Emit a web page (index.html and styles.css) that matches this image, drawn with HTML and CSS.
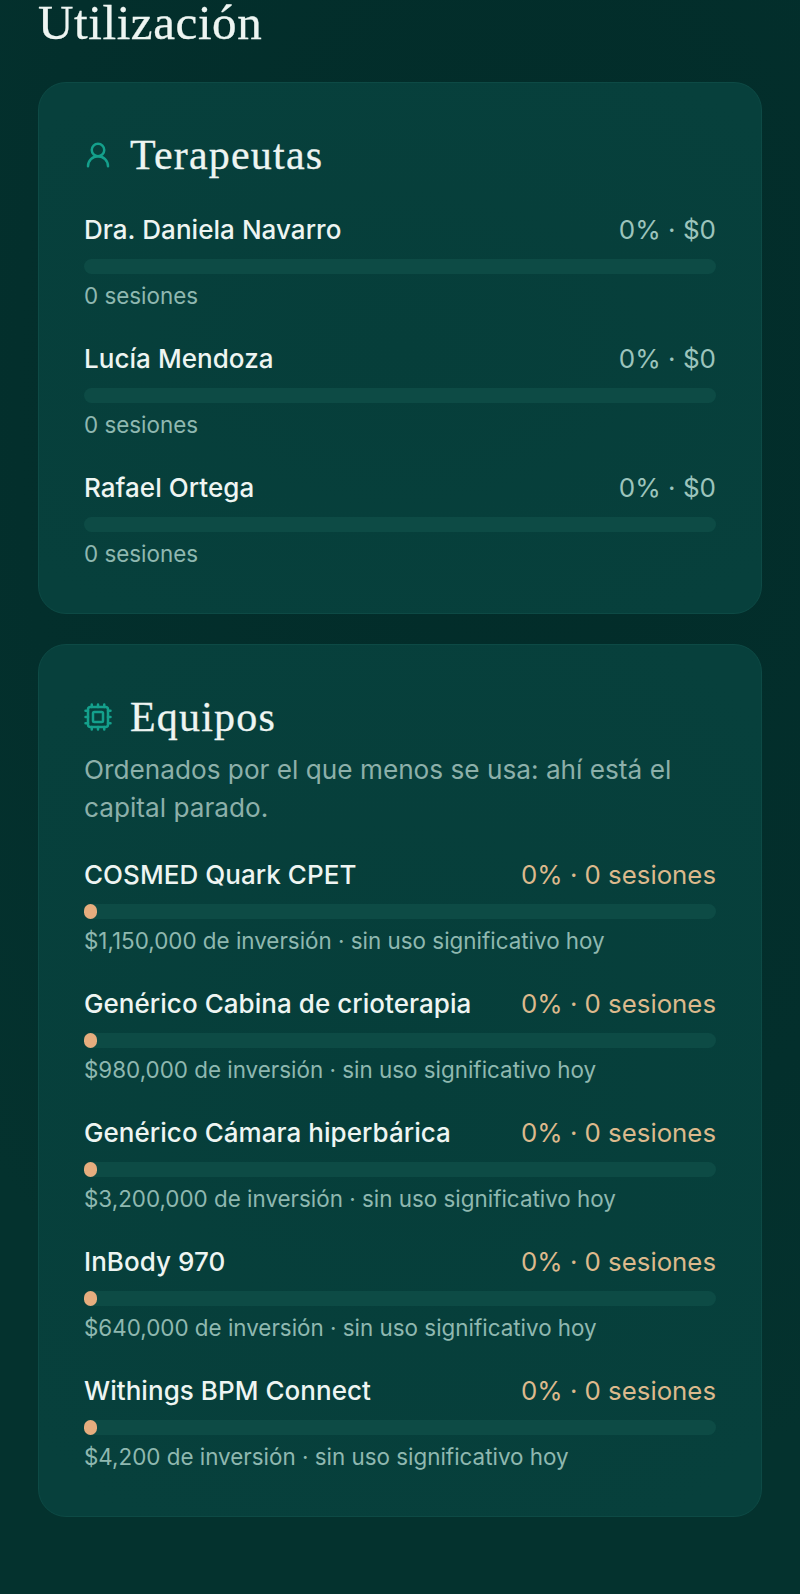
FILE: index.html
```html
<!DOCTYPE html>
<html lang="es">

<head>
    <meta charset="UTF-8">
    <title>Utilización</title>
    <link rel="stylesheet" href="styles.css">
</head>

<body>
    <div id="app">
        <h1 class="pageTitle">Utilización</h1>

        <section class="card">
            <h2 class="cardTitle">
                <svg class="cardIcon" viewBox="0 0 24 24" fill="none" stroke="currentColor" stroke-width="2" stroke-linecap="round" stroke-linejoin="round">
                    <circle cx="12" cy="8" r="5"></circle>
                    <path d="M20 21a8 8 0 0 0-16 0"></path>
                </svg>
                Terapeutas
            </h2>
            <ul class="usageList">
                <li>
                    <div class="usageHead"><span class="usageName">Dra. Daniela Navarro</span><span class="usageValue">0% · $0</span></div>
                    <div class="bar"></div>
                    <p class="usageNote">0 sesiones</p>
                </li>
                <li>
                    <div class="usageHead"><span class="usageName">Lucía Mendoza</span><span class="usageValue">0% · $0</span></div>
                    <div class="bar"></div>
                    <p class="usageNote">0 sesiones</p>
                </li>
                <li>
                    <div class="usageHead"><span class="usageName">Rafael Ortega</span><span class="usageValue">0% · $0</span></div>
                    <div class="bar"></div>
                    <p class="usageNote">0 sesiones</p>
                </li>
            </ul>
        </section>

        <section class="card">
            <h2 class="cardTitle">
                <svg class="cardIcon" viewBox="0 0 24 24" fill="none" stroke="currentColor" stroke-width="2" stroke-linecap="round" stroke-linejoin="round">
                    <rect x="4" y="4" width="16" height="16" rx="2"></rect>
                    <rect x="8" y="8" width="8" height="8" rx="1"></rect>
                    <path d="M7 2v2M12 2v2M17 2v2M7 20v2M12 20v2M17 20v2M2 7h2M2 12h2M2 17h2M20 7h2M20 12h2M20 17h2"></path>
                </svg>
                Equipos
            </h2>
            <p class="cardNote">Ordenados por el que menos se usa: ahí está el capital parado.</p>
            <ul class="usageList">
                <li>
                    <div class="usageHead"><span class="usageName">COSMED Quark CPET</span><span class="usageValue warm">0% · 0 sesiones</span></div>
                    <div class="bar"><div class="barFill"></div></div>
                    <p class="usageNote">$1,150,000 de inversión · sin uso significativo hoy</p>
                </li>
                <li>
                    <div class="usageHead"><span class="usageName">Genérico Cabina de crioterapia</span><span class="usageValue warm">0% · 0 sesiones</span></div>
                    <div class="bar"><div class="barFill"></div></div>
                    <p class="usageNote">$980,000 de inversión · sin uso significativo hoy</p>
                </li>
                <li>
                    <div class="usageHead"><span class="usageName">Genérico Cámara hiperbárica</span><span class="usageValue warm">0% · 0 sesiones</span></div>
                    <div class="bar"><div class="barFill"></div></div>
                    <p class="usageNote">$3,200,000 de inversión · sin uso significativo hoy</p>
                </li>
                <li>
                    <div class="usageHead"><span class="usageName">InBody 970</span><span class="usageValue warm">0% · 0 sesiones</span></div>
                    <div class="bar"><div class="barFill"></div></div>
                    <p class="usageNote">$640,000 de inversión · sin uso significativo hoy</p>
                </li>
                <li>
                    <div class="usageHead"><span class="usageName">Withings BPM Connect</span><span class="usageValue warm">0% · 0 sesiones</span></div>
                    <div class="bar"><div class="barFill"></div></div>
                    <p class="usageNote">$4,200 de inversión · sin uso significativo hoy</p>
                </li>
            </ul>
        </section>
    </div>
</body>

</html>
```

FILE: styles.css
```css
/* reset start */
* {
    padding: 0;
    margin: 0;
    box-sizing: border-box;
}

html,
body {
    width: 100%;
    height: 100%;
    overflow: hidden;
}

li {
    list-style: none;
}

/* reset end */


/* structure start */
body {
    background: radial-gradient(ellipse 90% 70% at 65% 25%, #022c29 0%, #032f2c 70%, #04322e 100%);
    background-color: #04302d;
    font-family: Inter, "Liberation Sans", sans-serif;
    color: #eef5f2;
}

#app {
    padding: 0 38px;
}

.pageTitle {
    height: 82px;
    font-family: "Liberation Serif", serif;
    font-size: 49px;
    font-weight: 400;
    line-height: 46px;
    letter-spacing: .6px;
    -webkit-text-stroke: .3px;
}

.card {
    margin-bottom: 30px;
    padding: 47px 45px 44px;
    background: radial-gradient(ellipse 70% 60% at 50% 50%, #063e3a 0%, #07403c 100%);
    border: 1px solid #0d4a45;
    border-radius: 28px;
}

.cardTitle {
    display: flex;
    align-items: center;
    gap: 17px;
    height: 50px;
    font-family: "Liberation Serif", serif;
    font-size: 42px;
    font-weight: 400;
    letter-spacing: 1.2px;
    -webkit-text-stroke: .3px;
}

.cardIcon {
    flex: none;
    width: 30px;
    height: 30px;
    margin-left: -1px;
    color: #14a08c;
}

.cardNote {
    margin-top: 9px;
    font-size: 26.2px;
    line-height: 38px;
    color: #8db0aa;
}

.usageList {
    margin-top: 31px;
}

.cardNote + .usageList {
    margin-top: 29px;
}

.usageList li {
    height: 129px;
}

.usageList li:last-child {
    height: 100px;
}

.usageHead {
    display: flex;
    justify-content: space-between;
    align-items: center;
    height: 36px;
    font-size: 26px;
}

.usageName {
    font-weight: 500;
    letter-spacing: .05px;
}

.usageValue {
    color: #9cc4bc;
}

.usageValue.warm {
    font-size: 25.8px;
    color: #dcb98c;
}

.bar {
    height: 15px;
    margin-top: 12px;
    background-color: #0d4b45;
    border-radius: 8px;
}

.barFill {
    width: 13px;
    height: 15px;
    background-color: #e6ad7e;
    border-radius: 8px;
}

.usageNote {
    margin-top: 7px;
    font-size: 22.4px;
    line-height: 30px;
    color: #8fb8b0;
}

/* structure end */
```
